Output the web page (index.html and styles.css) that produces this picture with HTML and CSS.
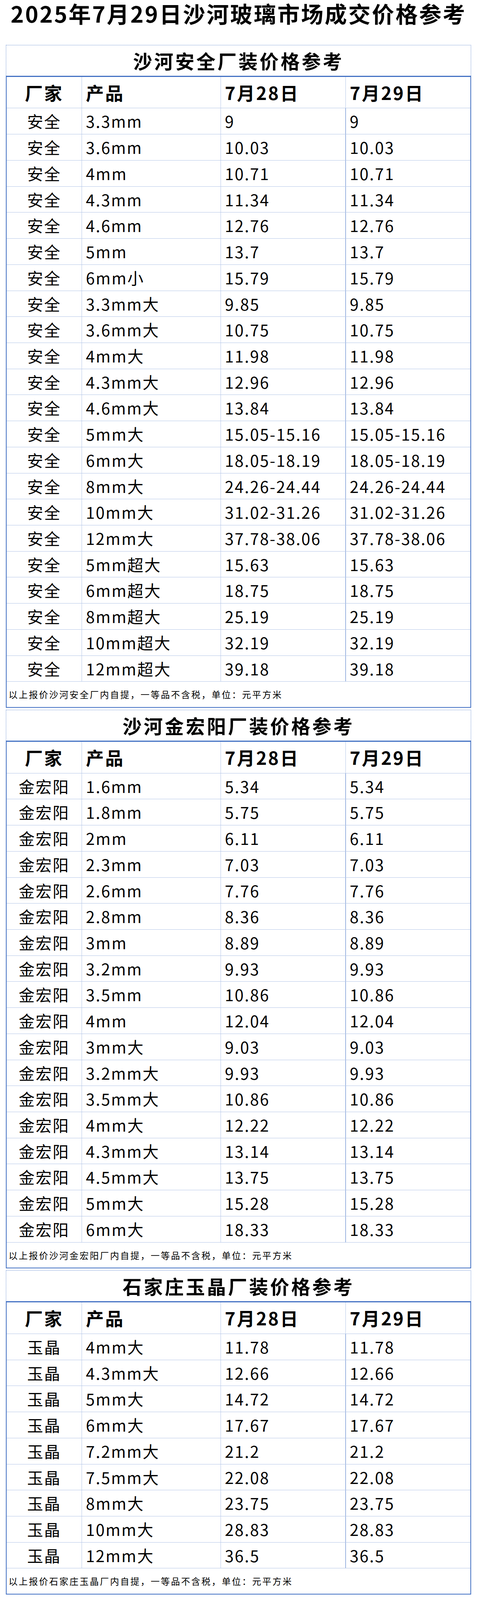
FILE: index.html
```html
<!DOCTYPE html>
<html lang="zh-CN">
<head>
<meta charset="utf-8">
<title>2025年7月29日沙河玻璃市场成交价格参考</title>
<link rel="stylesheet" href="styles.css">
</head>
<body>
<h1 class="page-title">2025年7月29日沙河玻璃市场成交价格参考</h1>

<section class="block">
  <h2 class="block-title">沙河安全厂装价格参考</h2>
  <div class="table">
    <div class="row head"><div class="c1">厂家</div><div class="c2">产品</div><div class="c3">7月28日</div><div class="c4">7月29日</div></div>
    <div class="row"><div class="c1">安全</div><div class="c2">3.3mm</div><div class="c3">9</div><div class="c4">9</div></div>
    <div class="row"><div class="c1">安全</div><div class="c2">3.6mm</div><div class="c3">10.03</div><div class="c4">10.03</div></div>
    <div class="row"><div class="c1">安全</div><div class="c2">4mm</div><div class="c3">10.71</div><div class="c4">10.71</div></div>
    <div class="row"><div class="c1">安全</div><div class="c2">4.3mm</div><div class="c3">11.34</div><div class="c4">11.34</div></div>
    <div class="row"><div class="c1">安全</div><div class="c2">4.6mm</div><div class="c3">12.76</div><div class="c4">12.76</div></div>
    <div class="row"><div class="c1">安全</div><div class="c2">5mm</div><div class="c3">13.7</div><div class="c4">13.7</div></div>
    <div class="row"><div class="c1">安全</div><div class="c2">6mm小</div><div class="c3">15.79</div><div class="c4">15.79</div></div>
    <div class="row"><div class="c1">安全</div><div class="c2">3.3mm大</div><div class="c3">9.85</div><div class="c4">9.85</div></div>
    <div class="row"><div class="c1">安全</div><div class="c2">3.6mm大</div><div class="c3">10.75</div><div class="c4">10.75</div></div>
    <div class="row"><div class="c1">安全</div><div class="c2">4mm大</div><div class="c3">11.98</div><div class="c4">11.98</div></div>
    <div class="row"><div class="c1">安全</div><div class="c2">4.3mm大</div><div class="c3">12.96</div><div class="c4">12.96</div></div>
    <div class="row"><div class="c1">安全</div><div class="c2">4.6mm大</div><div class="c3">13.84</div><div class="c4">13.84</div></div>
    <div class="row"><div class="c1">安全</div><div class="c2">5mm大</div><div class="c3">15.05-15.16</div><div class="c4">15.05-15.16</div></div>
    <div class="row"><div class="c1">安全</div><div class="c2">6mm大</div><div class="c3">18.05-18.19</div><div class="c4">18.05-18.19</div></div>
    <div class="row"><div class="c1">安全</div><div class="c2">8mm大</div><div class="c3">24.26-24.44</div><div class="c4">24.26-24.44</div></div>
    <div class="row"><div class="c1">安全</div><div class="c2">10mm大</div><div class="c3">31.02-31.26</div><div class="c4">31.02-31.26</div></div>
    <div class="row"><div class="c1">安全</div><div class="c2">12mm大</div><div class="c3">37.78-38.06</div><div class="c4">37.78-38.06</div></div>
    <div class="row"><div class="c1">安全</div><div class="c2">5mm超大</div><div class="c3">15.63</div><div class="c4">15.63</div></div>
    <div class="row"><div class="c1">安全</div><div class="c2">6mm超大</div><div class="c3">18.75</div><div class="c4">18.75</div></div>
    <div class="row"><div class="c1">安全</div><div class="c2">8mm超大</div><div class="c3">25.19</div><div class="c4">25.19</div></div>
    <div class="row"><div class="c1">安全</div><div class="c2">10mm超大</div><div class="c3">32.19</div><div class="c4">32.19</div></div>
    <div class="row"><div class="c1">安全</div><div class="c2">12mm超大</div><div class="c3">39.18</div><div class="c4">39.18</div></div>
    <div class="note">以上报价沙河安全厂内自提，一等品不含税，单位：元平方米</div>
  </div>
</section>

<section class="block">
  <h2 class="block-title">沙河金宏阳厂装价格参考</h2>
  <div class="table">
    <div class="row head"><div class="c1">厂家</div><div class="c2">产品</div><div class="c3">7月28日</div><div class="c4">7月29日</div></div>
    <div class="row"><div class="c1">金宏阳</div><div class="c2">1.6mm</div><div class="c3">5.34</div><div class="c4">5.34</div></div>
    <div class="row"><div class="c1">金宏阳</div><div class="c2">1.8mm</div><div class="c3">5.75</div><div class="c4">5.75</div></div>
    <div class="row"><div class="c1">金宏阳</div><div class="c2">2mm</div><div class="c3">6.11</div><div class="c4">6.11</div></div>
    <div class="row"><div class="c1">金宏阳</div><div class="c2">2.3mm</div><div class="c3">7.03</div><div class="c4">7.03</div></div>
    <div class="row"><div class="c1">金宏阳</div><div class="c2">2.6mm</div><div class="c3">7.76</div><div class="c4">7.76</div></div>
    <div class="row"><div class="c1">金宏阳</div><div class="c2">2.8mm</div><div class="c3">8.36</div><div class="c4">8.36</div></div>
    <div class="row"><div class="c1">金宏阳</div><div class="c2">3mm</div><div class="c3">8.89</div><div class="c4">8.89</div></div>
    <div class="row"><div class="c1">金宏阳</div><div class="c2">3.2mm</div><div class="c3">9.93</div><div class="c4">9.93</div></div>
    <div class="row"><div class="c1">金宏阳</div><div class="c2">3.5mm</div><div class="c3">10.86</div><div class="c4">10.86</div></div>
    <div class="row"><div class="c1">金宏阳</div><div class="c2">4mm</div><div class="c3">12.04</div><div class="c4">12.04</div></div>
    <div class="row"><div class="c1">金宏阳</div><div class="c2">3mm大</div><div class="c3">9.03</div><div class="c4">9.03</div></div>
    <div class="row"><div class="c1">金宏阳</div><div class="c2">3.2mm大</div><div class="c3">9.93</div><div class="c4">9.93</div></div>
    <div class="row"><div class="c1">金宏阳</div><div class="c2">3.5mm大</div><div class="c3">10.86</div><div class="c4">10.86</div></div>
    <div class="row"><div class="c1">金宏阳</div><div class="c2">4mm大</div><div class="c3">12.22</div><div class="c4">12.22</div></div>
    <div class="row"><div class="c1">金宏阳</div><div class="c2">4.3mm大</div><div class="c3">13.14</div><div class="c4">13.14</div></div>
    <div class="row"><div class="c1">金宏阳</div><div class="c2">4.5mm大</div><div class="c3">13.75</div><div class="c4">13.75</div></div>
    <div class="row"><div class="c1">金宏阳</div><div class="c2">5mm大</div><div class="c3">15.28</div><div class="c4">15.28</div></div>
    <div class="row"><div class="c1">金宏阳</div><div class="c2">6mm大</div><div class="c3">18.33</div><div class="c4">18.33</div></div>
    <div class="note">以上报价沙河金宏阳厂内自提，一等品不含税，单位：元平方米</div>
  </div>
</section>

<section class="block">
  <h2 class="block-title">石家庄玉晶厂装价格参考</h2>
  <div class="table">
    <div class="row head"><div class="c1">厂家</div><div class="c2">产品</div><div class="c3">7月28日</div><div class="c4">7月29日</div></div>
    <div class="row"><div class="c1">玉晶</div><div class="c2">4mm大</div><div class="c3">11.78</div><div class="c4">11.78</div></div>
    <div class="row"><div class="c1">玉晶</div><div class="c2">4.3mm大</div><div class="c3">12.66</div><div class="c4">12.66</div></div>
    <div class="row"><div class="c1">玉晶</div><div class="c2">5mm大</div><div class="c3">14.72</div><div class="c4">14.72</div></div>
    <div class="row"><div class="c1">玉晶</div><div class="c2">6mm大</div><div class="c3">17.67</div><div class="c4">17.67</div></div>
    <div class="row"><div class="c1">玉晶</div><div class="c2">7.2mm大</div><div class="c3">21.2</div><div class="c4">21.2</div></div>
    <div class="row"><div class="c1">玉晶</div><div class="c2">7.5mm大</div><div class="c3">22.08</div><div class="c4">22.08</div></div>
    <div class="row"><div class="c1">玉晶</div><div class="c2">8mm大</div><div class="c3">23.75</div><div class="c4">23.75</div></div>
    <div class="row"><div class="c1">玉晶</div><div class="c2">10mm大</div><div class="c3">28.83</div><div class="c4">28.83</div></div>
    <div class="row"><div class="c1">玉晶</div><div class="c2">12mm大</div><div class="c3">36.5</div><div class="c4">36.5</div></div>
    <div class="note">以上报价石家庄玉晶厂内自提，一等品不含税，单位：元平方米</div>
  </div>
</section>
</body>
</html>
```

FILE: styles.css
```css
html, body {
  margin: 0;
  padding: 0;
  background: #ffffff;
}

body {
  font-family: "Noto Sans CJK SC", "Noto Sans", sans-serif;
  color: #000000;
}

.page-title {
  margin: 0 0 47.25px 0;
  height: 67.5px;
  line-height: 67.5px;
  font-size: 57px;
  font-weight: 700;
  letter-spacing: 3.5px;
  text-align: center;
  white-space: nowrap;
}

.block {
  margin: 0 15px;
}

.block + .block {
  margin-top: 4.9px;
}

.block-title {
  margin: 0;
  height: 77.95px;
  line-height: 77.95px;
  font-size: 49px;
  font-weight: 700;
  letter-spacing: 5px;
  text-align: center;
  border-top: 1px dotted #4472c4;
  border-left: 1px dotted #4472c4;
  border-right: 1px dotted #4472c4;
}

.table {
  border-top: 3px solid #4472c4;
  border-left: 2px solid #4472c4;
  border-right: 2px solid #4472c4;
  border-bottom: 2px solid #4472c4;
}

.row {
  display: grid;
  grid-template-columns: 193px 356px 320px 1fr;
  box-sizing: border-box;
  height: 66.73px;
  border-bottom: 1px solid #b4c6e7;
  font-size: 41px;
  letter-spacing: 2.5px;
  line-height: 65.73px;
  white-space: nowrap;
}

.row > div {
  padding-left: 10px;
}

.row > .c1 {
  padding-left: 0;
  text-align: center;
  border-right: 1px solid #b4c6e7;
}

.row > .c2 {
  border-right: 1px solid #b4c6e7;
}

.row > .c3 {
  border-right: 1px solid #4472c4;
}

.row.head {
  height: 80.8px;
  line-height: 79.8px;
  font-size: 46px;
  letter-spacing: 3.5px;
  font-weight: 700;
}

.row.head > .c3 {
  border-right-color: #b4c6e7;
}

.note {
  height: 64.73px;
  line-height: 64.73px;
  padding-left: 5px;
  font-size: 23px;
  letter-spacing: 3px;
  white-space: nowrap;
}
```
